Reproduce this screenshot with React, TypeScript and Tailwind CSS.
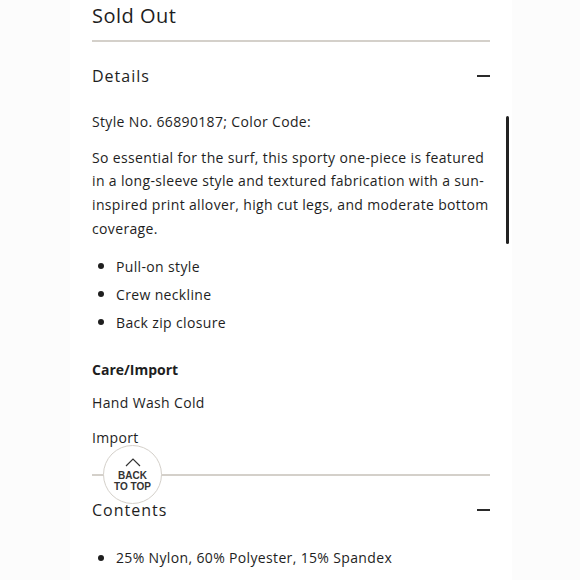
import React from 'react';

const Bullet = ({ children }: { children: React.ReactNode }) => (
  <li className="flex items-center h-[28px]">
    <span className="w-[6px] h-[6px] rounded-full bg-[#1f1f1f] ml-[6px] mr-[12px]" />
    <span>{children}</span>
  </li>
);

const Minus = () => <span className="block w-[13px] h-[2px] bg-[#2a2a2a]" />;

const App = () => {
  return (
    <div className="w-[580px] h-[580px] overflow-hidden bg-[#fcfcfc] font-['Open_Sans',sans-serif] text-[#1e1e1e]">
      <div className="relative ml-[70px] w-[442px] h-full bg-white px-[22px]">
        <div className="pt-[2px] text-[20px] leading-[28px] tracking-[0.5px]">Sold Out</div>
        <div className="mt-[10px] h-[1.5px] bg-[#d4d0ca]" />

        <div className="mt-[22px] flex items-center justify-between">
          <span className="text-[16px] leading-[24px] tracking-[1px]">Details</span>
          <Minus />
        </div>

        <div className="mt-[23px] text-[14px] leading-[22px] tracking-[0.35px]">Style No. 66890187; Color Code:</div>
        <p className="mt-[13px] text-[14px] leading-[23.7px] tracking-[0.35px]">
          So essential for the surf, this sporty one-piece is featured in a long-sleeve style and textured
          fabrication with a sun-inspired print allover, high cut legs, and moderate bottom coverage.
        </p>
        <ul className="mt-[12px] text-[14px] tracking-[0.35px]">
          <Bullet>Pull-on style</Bullet>
          <Bullet>Crew neckline</Bullet>
          <Bullet>Back zip closure</Bullet>
        </ul>

        <div className="mt-[23px] text-[14px] leading-[22px] font-bold">Care/Import</div>
        <div className="mt-[11px] text-[14px] leading-[22px] tracking-[0.35px]">Hand Wash Cold</div>
        <div className="mt-[13px] text-[14px] leading-[22px] tracking-[0.35px]">Import</div>

        <div className="relative mt-[25px] h-[1.5px] bg-[#d4d0ca]">
          <button className="absolute left-[11px] top-[-29px] w-[59px] h-[59px] rounded-full border-[1.5px] border-[#d4d0ca] bg-white flex flex-col items-center justify-center">
            <svg width="16" height="9" viewBox="0 0 16 9" className="mb-[4px]">
              <path d="M1 8 L8 1 L15 8" fill="none" stroke="#333" strokeWidth="1.2" />
            </svg>
            <span className="text-[10px] leading-[10px] font-bold text-[#333] font-['Liberation_Sans',sans-serif]">BACK</span>
            <span className="text-[10px] leading-[11px] font-bold text-[#333] font-['Liberation_Sans',sans-serif]">TO TOP</span>
          </button>
        </div>

        <div className="mt-[22px] flex items-center justify-between">
          <span className="text-[16px] leading-[24px] tracking-[1px]">Contents</span>
          <Minus />
        </div>
        <ul className="mt-[22px] text-[14px] tracking-[0.35px]">
          <Bullet>25% Nylon, 60% Polyester, 15% Spandex</Bullet>
        </ul>

        <div className="absolute left-[436px] top-[116px] w-[3px] h-[128px] rounded-full bg-[#222]" />
      </div>
    </div>
  );
};

export default App;
